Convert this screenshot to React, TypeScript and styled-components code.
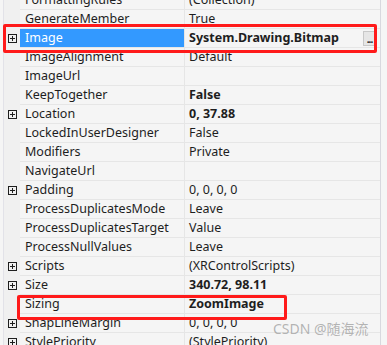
import React from 'react'
import styled, { createGlobalStyle } from 'styled-components'

const GlobalStyle = createGlobalStyle`
  html, body {
    margin: 0;
    padding: 0;
    overflow: hidden;
    background: #f5f5f5;
  }
`

const Grid = styled.div`
  position: relative;
  width: 387px;
  height: 345px;
  overflow: hidden;
  display: flex;
  background: #f5f5f5;
  font-family: "Noto Sans", "Noto Sans CJK SC", sans-serif;
  font-size: 12.5px;
  color: #1e1e1e;
`

const Table = styled.div`
  width: 380px;
  margin-top: -9px;
  border-right: 1px solid #d8d8de;
  display: flex;
  flex-direction: column;
`

const Strip = styled.div`
  flex: 1;
  background: #f5f5f5;
`

const Row = styled.div`
  display: flex;
  height: 19px;
`

const Gutter = styled.div`
  width: 20px;
  flex: none;
  display: flex;
  align-items: center;
  justify-content: flex-end;
  padding-right: 3px;
  box-sizing: border-box;
  background: #f0f0f0;
  border-left: 3px solid #f5f5f5;
  box-shadow: inset 1px 0 0 #e2e2e8;
`

const PlusBox = styled.div`
  width: 9px;
  height: 9px;
  box-sizing: border-box;
  border: 1px solid #1e1e1e;
  position: relative;
  &::before, &::after {
    content: '';
    position: absolute;
    background: #1e1e1e;
  }
  &::before { left: 1px; right: 1px; top: 3px; height: 1px; }
  &::after { top: 1px; bottom: 1px; left: 3px; width: 1px; }
`

const NameCell = styled.div<{ $selected?: boolean }>`
  width: 165px;
  flex: none;
  box-sizing: border-box;
  padding-left: 5px;
  line-height: 18px;
  border-bottom: 1px solid #e6e6e6;
  border-right: 1px solid #e6e6e6;
  white-space: nowrap;
  overflow: hidden;
  background: ${({ $selected }) => ($selected ? '#3399ff' : 'transparent')};
  color: ${({ $selected }) => ($selected ? '#ffffff' : '#1e1e1e')};
`

const ValueCell = styled.div<{ $bold?: boolean }>`
  flex: 1;
  display: flex;
  align-items: center;
  padding-left: 4px;
  line-height: 18px;
  border-bottom: 1px solid #e6e6e6;
  white-space: nowrap;
  font-weight: ${({ $bold }) => ($bold ? 700 : 400)};
`

const ValueText = styled.span`
  flex: 1;
`

const DotsButton = styled.div`
  width: 13px;
  height: 15px;
  margin-right: 4px;
  box-sizing: border-box;
  border: 1px solid #c8c8c8;
  background: #e6e6e6;
  font-size: 10px;
  font-weight: 700;
  line-height: 14px;
  text-align: center;
  letter-spacing: -1px;
`

const Mark = styled.div<{ $left: number; $top: number; $width: number; $height: number }>`
  position: absolute;
  left: ${({ $left }) => $left}px;
  top: ${({ $top }) => $top}px;
  width: ${({ $width }) => $width}px;
  height: ${({ $height }) => $height}px;
  box-sizing: border-box;
  border: 3px solid #ff1a1a;
  border-radius: 2px;
`

const Watermark = styled.div`
  position: absolute;
  left: 273px;
  top: 318px;
  font-size: 14px;
  color: rgba(150, 150, 150, 0.7);
  font-family: "Noto Sans", "Noto Sans CJK SC", sans-serif;
  white-space: nowrap;
`

type Prop = {
  name: string
  value: string
  bold?: boolean
  plus?: boolean
  selected?: boolean
  dots?: boolean
}

const props: Prop[] = [
  { name: 'FormattingRules', value: '(Collection)' },
  { name: 'GenerateMember', value: 'True' },
  { name: 'Image', value: 'System.Drawing.Bitmap', bold: true, plus: true, selected: true, dots: true },
  { name: 'ImageAlignment', value: 'Default' },
  { name: 'ImageUrl', value: '' },
  { name: 'KeepTogether', value: 'False', bold: true },
  { name: 'Location', value: '0, 37.88', bold: true, plus: true },
  { name: 'LockedInUserDesigner', value: 'False' },
  { name: 'Modifiers', value: 'Private' },
  { name: 'NavigateUrl', value: '' },
  { name: 'Padding', value: '0, 0, 0, 0', plus: true },
  { name: 'ProcessDuplicatesMode', value: 'Leave' },
  { name: 'ProcessDuplicatesTarget', value: 'Value' },
  { name: 'ProcessNullValues', value: 'Leave' },
  { name: 'Scripts', value: '(XRControlScripts)', plus: true },
  { name: 'Size', value: '340.72, 98.11', bold: true, plus: true },
  { name: 'Sizing', value: 'ZoomImage', bold: true },
  { name: 'SnapLineMargin', value: '0, 0, 0, 0', plus: true },
  { name: 'StylePriority', value: '(StylePriority)', plus: true },
]

const App = () => (
  <>
    <GlobalStyle />
    <Grid>
      <Table>
        {props.map((p) => (
          <Row key={p.name}>
            <Gutter>{p.plus && <PlusBox />}</Gutter>
            <NameCell $selected={p.selected}>{p.name}</NameCell>
            <ValueCell $bold={p.bold}>
              <ValueText>{p.value}</ValueText>
              {p.dots && <DotsButton>...</DotsButton>}
            </ValueCell>
          </Row>
        ))}
      </Table>
      <Strip />
      <Mark $left={3} $top={24} $width={374} $height={29} />
      <Mark $left={17} $top={295} $width={270} $height={25} />
      <Watermark>CSDN @随海流</Watermark>
    </Grid>
  </>
)

export default App
